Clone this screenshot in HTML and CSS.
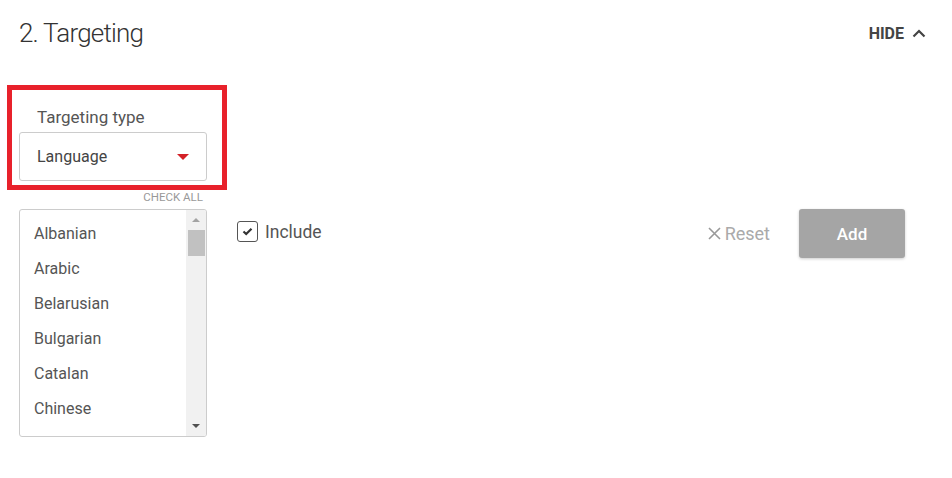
FILE: index.html
```html
<!DOCTYPE html>
<html lang="en">
<head>
  <meta charset="UTF-8" />
  <meta name="viewport" content="width=device-width, initial-scale=1.0"/>
  <title>Targeting</title>
  <link rel="stylesheet" href="styles.css">
</head>
<body>

  <section class="panel">
    <header class="panel-head">
      <h2>2. Targeting</h2>
      <button class="toggle">HIDE
        <svg width="14" height="9" viewBox="0 0 14 9"><path d="M1.5 7.5 L7 2 L12.5 7.5" fill="none" stroke="#444" stroke-width="2.2"/></svg>
      </button>
    </header>

    <div class="type-field">
      <label>Targeting type</label>
      <div class="select">
        <span>Language</span>
        <span class="caret"></span>
      </div>
    </div>

    <div class="row">
      <div class="list-col">
        <a class="check-all">CHECK ALL</a>
        <div class="list">
          <ul id="langList"></ul>
          <div class="scrollbar">
            <span class="arrow up"></span>
            <span class="thumb"></span>
            <span class="arrow down"></span>
          </div>
        </div>
      </div>

      <label class="include">
        <span class="box">
          <svg width="11" height="9" viewBox="0 0 11 9"><path d="M1.5 4.5 L4.2 7 L9.5 1.8" fill="none" stroke="#333" stroke-width="2.2"/></svg>
        </span>
        Include
      </label>

      <div class="actions">
        <button class="reset">
          <svg width="13" height="13" viewBox="0 0 13 13"><path d="M1 1 L12 12 M12 1 L1 12" stroke="#999" stroke-width="1.6"/></svg>
          Reset
        </button>
        <button class="add">Add</button>
      </div>
    </div>
  </section>

  <script>
    const languages = ['Albanian', 'Arabic', 'Belarusian', 'Bulgarian', 'Catalan', 'Chinese'];
    document.getElementById('langList').innerHTML = languages.map(l => `<li>${l}</li>`).join('');
  </script>
</body>
</html>
```

FILE: styles.css
```css
body {
  font-family: Roboto, "Open Sans", sans-serif;
  background-color: #fff;
  margin: 0;
  color: #555;
}

.panel {
  padding: 16px 26px 0 19px;
}

.panel-head {
  display: flex;
  justify-content: space-between;
  align-items: center;
}

.panel-head h2 {
  margin: 0;
  font-size: 26px;
  font-weight: 300;
  line-height: 34px;
  letter-spacing: -0.8px;
  color: #333;
}

.toggle {
  display: flex;
  align-items: center;
  gap: 8px;
  border: none;
  background: none;
  padding: 0;
  font-family: inherit;
  font-size: 16px;
  font-weight: 700;
  color: #444;
  cursor: pointer;
}

/* highlighted field */
.type-field {
  position: relative;
  width: 188px;
  margin-top: 57px;
}

.type-field::after {
  content: "";
  position: absolute;
  top: -22px;
  left: -12px;
  right: -20px;
  bottom: -9px;
  border: 5px solid #e8212b;
  pointer-events: none;
}

.type-field label {
  display: block;
  padding-left: 18px;
  margin-bottom: 5px;
  font-size: 17px;
  line-height: 20px;
  color: #555;
}

.select {
  display: flex;
  align-items: center;
  justify-content: space-between;
  height: 47px;
  padding: 0 17px;
  border: 1px solid #ccc;
  border-radius: 3px;
  font-size: 16px;
  color: #444;
}

.caret {
  width: 0;
  height: 0;
  border-left: 6px solid transparent;
  border-right: 6px solid transparent;
  border-top: 6px solid #d42128;
}

.row {
  display: flex;
  align-items: flex-start;
  margin-top: 9px;
}

.list-col {
  width: 188px;
}

.check-all {
  display: block;
  text-align: right;
  padding-right: 4px;
  font-size: 11.5px;
  line-height: 14px;
  color: #999;
  cursor: pointer;
}

.list {
  display: flex;
  height: 226px;
  margin-top: 5px;
  border: 1px solid #ccc;
  border-radius: 3px;
  overflow: hidden;
}

.list ul {
  flex: 1;
  list-style: none;
  margin: 0;
  padding: 6px 0 0 14px;
  overflow: hidden;
}

.list li {
  font-size: 16px;
  line-height: 35px;
  color: #555;
}

.scrollbar {
  display: flex;
  flex-direction: column;
  align-items: center;
  width: 20px;
  background-color: #f1f1f1;
}

.scrollbar .thumb {
  width: 17px;
  height: 26px;
  background-color: #c1c1c1;
}

.arrow {
  width: 0;
  height: 0;
  border-left: 4px solid transparent;
  border-right: 4px solid transparent;
}

.arrow.up {
  margin: 8px 0 8px;
  border-bottom: 4px solid #a3a3a3;
}

.arrow.down {
  margin: auto 0 8px;
  border-top: 4px solid #505050;
}

.include {
  display: flex;
  align-items: center;
  gap: 7px;
  margin: 31px 0 0 30px;
  font-size: 17.5px;
  color: #555;
  cursor: pointer;
}

.include .box {
  display: flex;
  align-items: center;
  justify-content: center;
  width: 19px;
  height: 19px;
  border: 1px solid #555;
  border-radius: 3px;
}

.actions {
  display: flex;
  align-items: center;
  gap: 29px;
  margin: 19px 21px 0 auto;
}

.reset {
  display: flex;
  align-items: center;
  gap: 4px;
  border: none;
  background: none;
  padding: 0;
  font-family: inherit;
  font-size: 18px;
  color: #aaa;
  cursor: pointer;
}

.add {
  width: 106px;
  height: 49px;
  border: none;
  border-radius: 3px;
  background-color: #a5a5a5;
  box-shadow: 0 1px 3px rgba(0,0,0,0.2);
  font-family: inherit;
  font-size: 17px;
  font-weight: 500;
  color: #fff;
  cursor: pointer;
}
```
